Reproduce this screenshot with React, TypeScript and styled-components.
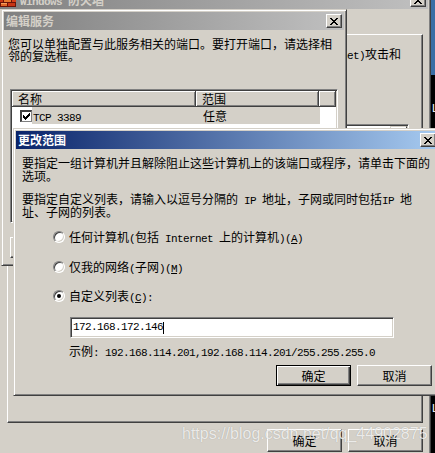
import * as React from 'react';
import styled, { createGlobalStyle } from 'styled-components';

const FACE = '#d4d0c8';
const SHADOW = '#808080';
const DARK = '#404040';
const HILITE = '#ffffff';

const GlobalStyle = createGlobalStyle`
  html, body {
    margin: 0;
    padding: 0;
    background: #000;
  }
  * {
    box-sizing: border-box;
  }
`;

const Desktop = styled.div`
  position: relative;
  width: 435px;
  height: 453px;
  overflow: hidden;
  background: linear-gradient(to bottom, #3a6ea5 0, #3a6ea5 75px, #000 75px);
  font-family: "Noto Sans CJK SC", "Liberation Sans", sans-serif;
  font-size: 12px;
  color: #000;
`;

const DesktopLabel = styled.span<{ $x: number; $y: number }>`
  position: absolute;
  left: ${(p) => p.$x}px;
  top: ${(p) => p.$y}px;
  color: #fff;
  font-family: "Liberation Sans", sans-serif;
  font-size: 11px;
  line-height: 12px;
`;

const Window = styled.div<{ $x: number; $y: number; $w: number; $h: number }>`
  position: absolute;
  left: ${(p) => p.$x}px;
  top: ${(p) => p.$y}px;
  width: ${(p) => p.$w}px;
  height: ${(p) => p.$h}px;
  display: flex;
  flex-direction: column;
  padding: 2px;
  background: ${FACE};
  border: 1px solid;
  border-color: ${FACE} ${DARK} ${DARK} ${FACE};
  box-shadow: inset 1px 1px ${HILITE}, inset -1px -1px ${SHADOW};
`;

const TitleBar = styled.div<{ $active?: boolean }>`
  flex: none;
  height: 18px;
  display: flex;
  align-items: center;
  gap: 4px;
  padding: 0 2px;
  background: ${(p) =>
    p.$active
      ? 'linear-gradient(to right, #0a246a, #a6caf0)'
      : 'linear-gradient(to right, #808080, #c0c0c0)'};
  color: ${(p) => (p.$active ? '#fff' : FACE)};
  font-weight: bold;
  line-height: 18px;
  white-space: nowrap;
`;

const TitleText = styled.span`
  flex: 1;
  overflow: hidden;
`;

const CloseButton = styled.div`
  flex: none;
  width: 16px;
  height: 14px;
  display: flex;
  align-items: center;
  justify-content: center;
  background: ${FACE};
  border: 1px solid;
  border-color: ${HILITE} ${DARK} ${DARK} ${HILITE};
  box-shadow: inset -1px -1px ${SHADOW};
`;

const DialogBody = styled.div<{ $pt: number }>`
  flex: 1;
  min-height: 0;
  display: flex;
  flex-direction: column;
  align-items: flex-start;
  padding-top: ${(p) => p.$pt}px;
`;

const Para = styled.div<{ $lh: number; $indent: number; $mt?: number }>`
  flex: none;
  margin-top: ${(p) => p.$mt ?? 0}px;
  padding-left: ${(p) => p.$indent}px;
  line-height: ${(p) => p.$lh}px;
`;

const Line = styled.div`
  white-space: nowrap;
`;

// half-width runs drawn at 6px per character, as the old bitmap font did
const Latin = styled.span`
  font-family: "Liberation Mono", "DejaVu Sans Mono", monospace;
  font-size: 11px;
  letter-spacing: -0.6px;
  line-height: 0;
`;

const FieldText = styled.span`
  font-family: "Liberation Mono", "DejaVu Sans Mono", monospace;
  font-size: 11px;
  letter-spacing: -0.6px;
  line-height: 13px;
`;

const ListView = styled.div`
  flex: none;
  margin: 27px 0 0 6px;
  width: 328px;
  height: 134px;
  padding: 1px;
  display: flex;
  flex-direction: column;
  background: #fff;
  border: 1px solid;
  border-color: ${SHADOW} ${HILITE} ${HILITE} ${SHADOW};
  box-shadow: inset 1px 1px ${DARK}, inset -1px -1px ${FACE};
`;

const ListHeader = styled.div`
  display: flex;
  height: 16px;
`;

const HeaderCell = styled.div<{ $w?: number }>`
  ${(p) => (p.$w ? `width: ${p.$w}px;` : 'flex: 1;')}
  height: 16px;
  padding-left: 6px;
  line-height: 16px;
  white-space: nowrap;
  background: ${FACE};
  border-right: 1px solid ${DARK};
  border-bottom: 1px solid ${DARK};
  box-shadow: inset 1px 1px ${HILITE}, inset -1px -1px ${SHADOW};
`;

const ListRow = styled.div`
  display: flex;
  align-items: center;
  height: 17px;
  line-height: 17px;
`;

const CheckCell = styled.div`
  width: 20px;
  display: flex;
  align-items: center;
  padding-left: 8px;
`;

const CheckBox = styled.span`
  width: 12px;
  height: 12px;
  display: flex;
  align-items: center;
  justify-content: center;
  background: #fff;
  border-style: solid;
  border-width: 2px 1px 1px 2px;
  border-color: ${DARK} ${SHADOW} ${SHADOW} ${DARK};
`;

const Selection = styled.div`
  display: flex;
  width: 288px;
  height: 17px;
  background: ${FACE};
`;

const RowCell = styled.div<{ $w: number; $pad: number }>`
  width: ${(p) => p.$w}px;
  padding-left: ${(p) => p.$pad}px;
  white-space: nowrap;
`;

const ButtonRow = styled.div<{ $mt: number; $pr: number; $ml?: number }>`
  flex: none;
  align-self: stretch;
  display: flex;
  justify-content: ${(p) => (p.$ml !== undefined ? 'flex-start' : 'flex-end')};
  gap: 6px;
  margin-top: ${(p) => p.$mt}px;
  padding-left: ${(p) => p.$ml ?? 0}px;
  padding-right: ${(p) => p.$pr}px;
`;

const PushButton = styled.div<{ $default?: boolean; $h?: number; $w?: number }>`
  width: ${(p) => p.$w ?? 75}px;
  height: ${(p) => p.$h ?? 21}px;
  display: flex;
  align-items: center;
  justify-content: center;
  white-space: nowrap;
  background: ${FACE};
  border: 1px solid;
  border-color: ${(p) =>
    p.$default ? '#000' : `${HILITE} ${DARK} ${DARK} ${HILITE}`};
  box-shadow: ${(p) =>
    p.$default
      ? `inset 1px 1px ${HILITE}, inset -1px -1px ${DARK}, inset -2px -2px ${SHADOW}`
      : `inset -1px -1px ${SHADOW}`};
`;

const RadioRow = styled.div<{ $mt: number }>`
  flex: none;
  display: flex;
  align-items: center;
  gap: 4px;
  height: 13px;
  margin-top: ${(p) => p.$mt}px;
  padding-left: 37px;
  line-height: 13px;
  white-space: nowrap;
`;

const Radio = styled.span<{ $checked?: boolean }>`
  flex: none;
  width: 12px;
  height: 12px;
  display: flex;
  align-items: center;
  justify-content: center;
  border-radius: 50%;
  background: #fff;
  border: 1px solid;
  border-color: ${SHADOW} ${HILITE} ${HILITE} ${SHADOW};
  box-shadow: inset 1px 1px ${DARK}, inset -1px -1px ${FACE};

  &::after {
    content: '';
    display: ${(p) => (p.$checked ? 'block' : 'none')};
    width: 4px;
    height: 4px;
    border-radius: 50%;
    background: #000;
  }
`;

const TextField = styled.div`
  flex: none;
  margin: 15px 0 0 54px;
  width: 324px;
  height: 21px;
  display: flex;
  align-items: center;
  padding: 0 2px;
  background: #fff;
  border: 1px solid;
  border-color: ${SHADOW} ${HILITE} ${HILITE} ${SHADOW};
  box-shadow: inset 1px 1px ${DARK}, inset -1px -1px ${FACE};
`;

const Caret = styled.span`
  display: inline-block;
  width: 1px;
  height: 12px;
  background: #000;
`;

const TabPanel = styled.div`
  flex: none;
  margin-left: 9px;
  width: 416px;
  height: 389px;
  display: flex;
  flex-direction: column;
  align-items: flex-start;
  border: 1px solid;
  border-color: ${HILITE} ${DARK} ${DARK} ${HILITE};
  box-shadow: inset -1px -1px ${SHADOW};
`;

const ProgramList = styled.div`
  flex: none;
  margin: 64px 0 0 8px;
  width: 393px;
  height: 150px;
  padding: 1px;
  display: flex;
  justify-content: flex-end;
  background: #fff;
  border: 1px solid;
  border-color: ${SHADOW} ${HILITE} ${HILITE} ${SHADOW};
  box-shadow: inset 1px 1px ${DARK}, inset -1px -1px ${FACE};
`;

const ScrollTrack = styled.div`
  width: 17px;
  background: #e8e6e1;
`;

const ScrollArrow = styled.div`
  height: 17px;
  background: ${FACE};
  border: 1px solid;
  border-color: ${FACE} ${DARK} ${DARK} ${FACE};
  box-shadow: inset 1px 1px ${HILITE}, inset -1px -1px ${SHADOW};
`;

const Watermark = styled.div`
  position: absolute;
  left: 182px;
  top: 425px;
  font-family: "Liberation Sans", Arial, sans-serif;
  font-size: 16px;
  line-height: 18px;
  color: rgba(255, 255, 255, 0.78);
  text-shadow: 0 0 1px rgba(0, 0, 0, 0.25);
  white-space: nowrap;
`;

const CloseGlyph = () => (
  <svg width="8" height="7" viewBox="0 0 8 7" shapeRendering="crispEdges">
    <path
      fill="#000"
      d="M0 0h2v1h-2zM6 0h2v1h-2zM1 1h2v1h-2zM5 1h2v1h-2zM2 2h4v1h-4zM3 3h2v1h-2zM2 4h4v1h-4zM1 5h2v1h-2zM5 5h2v1h-2zM0 6h2v1h-2zM6 6h2v1h-2z"
    />
  </svg>
);

const CheckGlyph = () => (
  <svg width="7" height="7" viewBox="0 0 7 7" shapeRendering="crispEdges">
    <path
      fill="#000"
      d="M6 0h1v3h-1zM5 1h1v3h-1zM4 2h1v3h-1zM0 2h1v3h-1zM1 3h1v3h-1zM2 4h1v3h-1zM3 3h1v3h-1z"
    />
  </svg>
);

const FirewallIcon = () => (
  <svg width="16" height="16" viewBox="0 0 16 16" shapeRendering="crispEdges">
    <rect x="0" y="2" width="16" height="13" fill="#6b1408" />
    <rect x="1" y="3" width="6" height="3" fill="#d8401a" />
    <rect x="8" y="3" width="7" height="3" fill="#e0682a" />
    <rect x="0" y="7" width="3" height="3" fill="#c83414" />
    <rect x="4" y="7" width="7" height="3" fill="#e8782e" />
    <rect x="12" y="7" width="4" height="3" fill="#d8401a" />
    <rect x="1" y="11" width="6" height="3" fill="#e0682a" />
    <rect x="8" y="11" width="7" height="3" fill="#c83414" />
    <rect x="1" y="3" width="6" height="1" fill="#f6a060" />
    <rect x="4" y="7" width="7" height="1" fill="#f8b070" />
    <rect x="1" y="11" width="6" height="1" fill="#f6a060" />
  </svg>
);

const FirewallWindow = () => (
  <Window $x={-5} $y={-12} $w={436} $h={480}>
    <TitleBar>
      <FirewallIcon />
      <TitleText>
        <Latin>Windows </Latin>防火墙
      </TitleText>
      <CloseButton>
        <CloseGlyph />
      </CloseButton>
    </TitleBar>
    <DialogBody $pt={25}>
      <TabPanel>
        <Para $lh={13} $indent={9} $mt={12}>
          <Line>
            <Latin>Windows </Latin>防火墙可以帮助保护您的计算机免受外部网络<Latin>(Internet)</Latin>攻击和
          </Line>
        </Para>
        <ProgramList>
          <ScrollTrack>
            <ScrollArrow />
          </ScrollTrack>
        </ProgramList>
      </TabPanel>
      <ButtonRow $mt={6} $pr={5}>
        <PushButton $h={23}>确定</PushButton>
        <PushButton $h={23}>取消</PushButton>
      </ButtonRow>
    </DialogBody>
  </Window>
);

const EditServiceDialog = () => (
  <Window $x={1} $y={9} $w={346} $h={257}>
    <TitleBar>
      <TitleText>编辑服务</TitleText>
      <CloseButton>
        <CloseGlyph />
      </CloseButton>
    </TitleBar>
    <DialogBody $pt={8}>
      <Para $lh={12} $indent={4}>
        <Line>您可以单独配置与此服务相关的端口。要打开端口，请选择相</Line>
        <Line>邻的复选框。</Line>
      </Para>
      <ListView>
        <ListHeader>
          <HeaderCell $w={184}>名称</HeaderCell>
          <HeaderCell $w={123}>范围</HeaderCell>
          <HeaderCell />
        </ListHeader>
        <ListRow>
          <CheckCell>
            <CheckBox>
              <CheckGlyph />
            </CheckBox>
          </CheckCell>
          <Selection>
            <RowCell $w={164} $pad={1}>
              <Latin>TCP 3389</Latin>
            </RowCell>
            <RowCell $w={124} $pad={7}>
              任意
            </RowCell>
          </Selection>
        </ListRow>
      </ListView>
      <ButtonRow $mt={14} $pr={0} $ml={6}>
        <PushButton $w={100}>
          更改范围(<u>C</u>)...
        </PushButton>
      </ButtonRow>
    </DialogBody>
  </Window>
);

const ChangeScopeDialog = () => (
  <Window $x={13} $y={128} $w={428} $h={268}>
    <TitleBar $active>
      <TitleText>更改范围</TitleText>
      <CloseButton>
        <CloseGlyph />
      </CloseButton>
    </TitleBar>
    <DialogBody $pt={7}>
      <Para $lh={13} $indent={6}>
        <Line>要指定一组计算机并且解除阻止这些计算机上的该端口或程序，请单击下面的</Line>
        <Line>选项。</Line>
      </Para>
      <Para $lh={13} $indent={6} $mt={10}>
        <Line>
          要指定自定义列表，请输入以逗号分隔的<Latin> IP </Latin>地址，子网或同时包括<Latin>IP </Latin>地
        </Line>
        <Line>址、子网的列表。</Line>
      </Para>
      <RadioRow $mt={12}>
        <Radio />
        <span>
          任何计算机<Latin>(</Latin>包括<Latin> Internet </Latin>上的计算机
          <Latin>
            )(<u>A</u>)
          </Latin>
        </span>
      </RadioRow>
      <RadioRow $mt={17}>
        <Radio />
        <span>
          仅我的网络<Latin>(</Latin>子网<Latin>)(<u>M</u>)</Latin>
        </span>
      </RadioRow>
      <RadioRow $mt={16}>
        <Radio $checked />
        <span>
          自定义列表<Latin>(<u>C</u>):</Latin>
        </span>
      </RadioRow>
      <TextField>
        <FieldText>172.168.172.146</FieldText>
        <Caret />
      </TextField>
      <Para $lh={13} $indent={53} $mt={6}>
        <Line>
          示例<Latin>: 192.168.114.201,192.168.114.201/255.255.255.0</Latin>
        </Line>
      </Para>
      <ButtonRow $mt={8} $pr={6}>
        <PushButton $default>确定</PushButton>
        <PushButton>取消</PushButton>
      </ButtonRow>
    </DialogBody>
  </Window>
);

const App: React.FC = () => (
  <>
    <GlobalStyle />
    <Desktop>
      <DesktopLabel $x={432} $y={102}>L</DesktopLabel>
      <DesktopLabel $x={432} $y={402}>L</DesktopLabel>
      <FirewallWindow />
      <EditServiceDialog />
      <ChangeScopeDialog />
      <Watermark>https://blog.csdn.net/qq_44902875</Watermark>
    </Desktop>
  </>
);

export default App;
